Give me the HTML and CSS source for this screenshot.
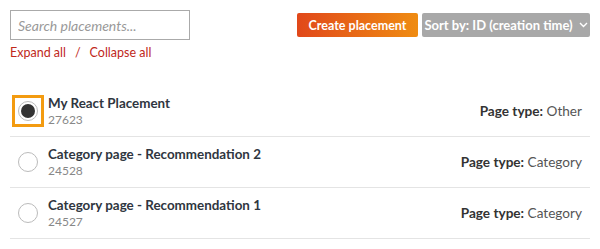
FILE: index.html
```html
<!DOCTYPE html>
<html>
<head>
<meta charset="utf-8">
<link rel="stylesheet" href="styles.css">
</head>
<body>
<div class="page">
  <div class="toolbar">
    <div class="left">
      <input class="search" type="text" placeholder="Search placements...">
      <div class="links">
        <a class="link" href="#">Expand all</a>
        <span class="sep">/</span>
        <a class="link" href="#">Collapse all</a>
      </div>
    </div>
    <div class="actions">
      <button class="btn-create">Create placement</button>
      <button class="btn-sort"><span>Sort by: ID (creation time)</span>
        <svg class="chev" width="9" height="6" viewBox="0 0 9 6"><path d="M1 1l3.5 3.5L8 1" fill="none" stroke="#fff" stroke-width="1.4"/></svg>
      </button>
    </div>
  </div>
  <ul class="list">
    <li class="row">
      <span class="radio-wrap focused"><span class="radio checked"></span></span>
      <div class="info">
        <div class="title">My React Placement</div>
        <div class="id">27623</div>
      </div>
      <div class="type"><b>Page type:</b> Other</div>
    </li>
    <li class="row">
      <span class="radio-wrap"><span class="radio"></span></span>
      <div class="info">
        <div class="title">Category page - Recommendation 2</div>
        <div class="id">24528</div>
      </div>
      <div class="type"><b>Page type:</b> Category</div>
    </li>
    <li class="row">
      <span class="radio-wrap"><span class="radio"></span></span>
      <div class="info">
        <div class="title">Category page - Recommendation 1</div>
        <div class="id">24527</div>
      </div>
      <div class="type"><b>Page type:</b> Category</div>
    </li>
  </ul>
</div>
</body>
</html>
```
FILE: styles.css
```css
* { box-sizing: border-box; }
body {
  margin: 0;
  background: #fff;
  font-family: "Source Sans Pro", Lato, "Open Sans", sans-serif;
  color: #333;
}
.page { padding: 10px 10px 0 10px; }
.toolbar {
  display: flex;
  justify-content: space-between;
  align-items: flex-start;
}
.search {
  display: block;
  width: 180px;
  height: 30px;
  border: 1px solid #aaa;
  border-radius: 0;
  padding: 0 7px;
  font-family: inherit;
  font-size: 14px;
  font-style: italic;
  outline: none;
}
.search::placeholder { color: #999; }
.links {
  margin-top: 5px;
  font-size: 12.5px;
  display: flex;
  align-items: center;
}
.link { color: #c0281b; text-decoration: none; }
.sep { color: #c0281b; margin: 0 9px; }
.actions {
  display: flex;
  gap: 4px;
  margin-top: 3px;
}
.btn-create, .btn-sort {
  height: 24px;
  border: none;
  border-radius: 2px;
  color: #fff;
  font-family: inherit;
  font-weight: 700;
  font-size: 12.5px;
  white-space: nowrap;
  padding: 0;
}
.btn-create {
  background: linear-gradient(90deg, #e1481a, #ef8c12);
  width: 121px;
}
.btn-sort {
  background: #a8a8a8;
  width: 168px;
  font-size: 13px;
  display: flex;
  align-items: center;
  justify-content: center;
}
.chev { margin-left: 6px; }
.list {
  list-style: none;
  margin: 26px 0 0 0;
  padding: 0;
}
.row {
  display: flex;
  align-items: center;
  height: 51px;
  border-bottom: 1px solid #e4e4e4;
}
.radio-wrap {
  width: 32px;
  height: 32px;
  margin-left: 2px;
  margin-right: 4px;
  display: flex;
  align-items: center;
  justify-content: center;
  border: 3px solid transparent;
}
.radio-wrap.focused { border-color: #f39b10; }
.radio {
  width: 20px;
  height: 20px;
  border-radius: 50%;
  border: 1px solid #bbb;
  display: flex;
  align-items: center;
  justify-content: center;
  background: #fff;
}
.radio.checked::after {
  content: "";
  width: 14px;
  height: 14px;
  border-radius: 50%;
  background: #333;
}
.info { flex: 1; }
.title { font-size: 13.4px; font-weight: 700; color: #2f3640; line-height: 18px; }
.id { font-size: 12px; color: #888; line-height: 16px; }
.type { font-size: 13.6px; color: #555; margin-right: 8px; }
.type b { color: #333; }
```
